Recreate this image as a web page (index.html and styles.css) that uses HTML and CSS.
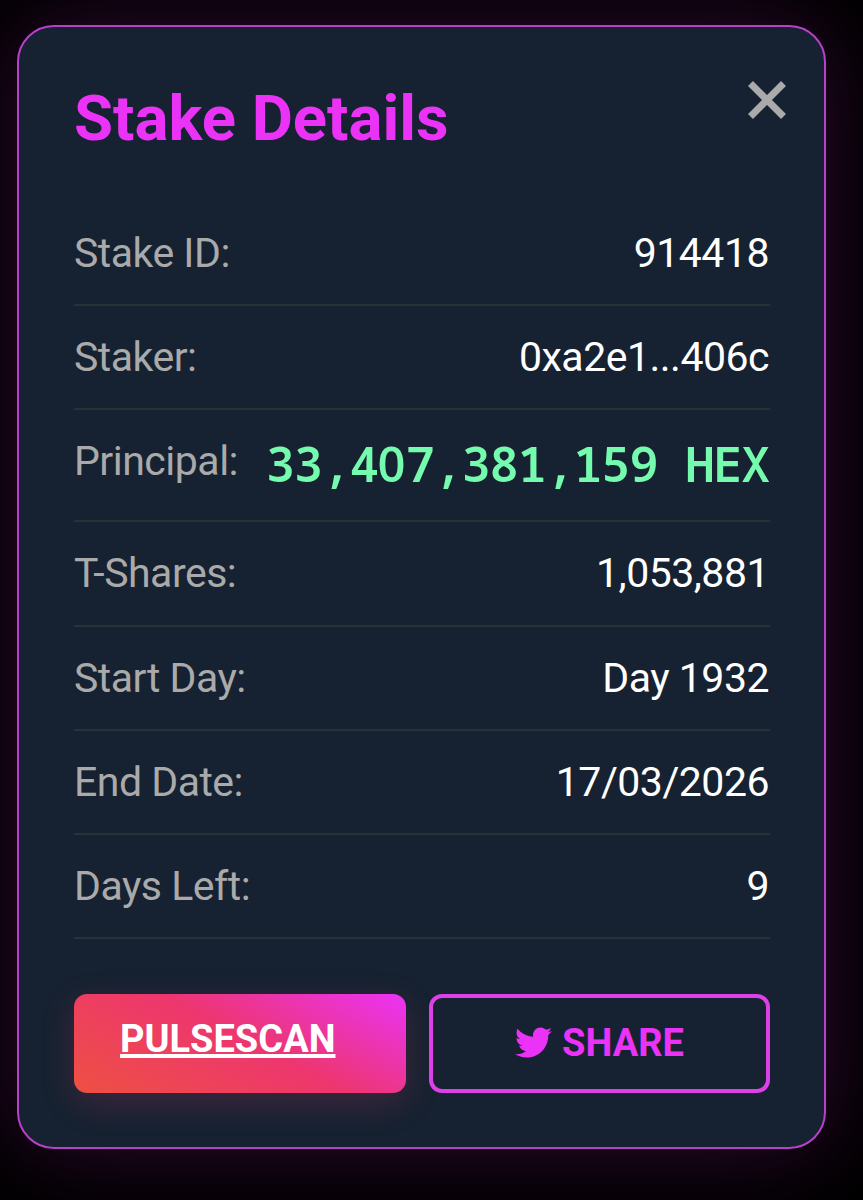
FILE: index.html
```html
<!DOCTYPE html>
<html lang="en">
<head>
    <meta charset="UTF-8">
    <meta name="viewport" content="width=device-width, initial-scale=1.0">
    <title>Stake Details</title>
    <link rel="stylesheet" href="styles.css">
</head>
<body>
    <div class="modal">
        <button class="close" aria-label="Close">
            <svg viewBox="0 0 38 38"><path d="M2.5 2.5 L35.5 35.5 M35.5 2.5 L2.5 35.5"/></svg>
        </button>
        <h2>Stake Details</h2>
        <div class="details">
            <div class="row"><span class="label">Stake ID:</span><span class="value">914418</span></div>
            <div class="row"><span class="label">Staker:</span><span class="value">0xa2e1...406c</span></div>
            <div class="row principal"><span class="label">Principal:</span><span class="amount">33,4<span class="zero">0</span>7,381,159 HEX</span></div>
            <div class="row"><span class="label">T-Shares:</span><span class="value">1,053,881</span></div>
            <div class="row"><span class="label">Start Day:</span><span class="value">Day 1932</span></div>
            <div class="row"><span class="label">End Date:</span><span class="value">17/03/2026</span></div>
            <div class="row"><span class="label">Days Left:</span><span class="value">9</span></div>
        </div>
        <div class="actions">
            <a class="btn scan" href="#">PULSESCAN</a>
            <button class="btn share">
                <svg viewBox="0 0 512 512"><path d="M459.37 151.716c.325 4.548.325 9.097.325 13.645 0 138.72-105.583 298.558-298.558 298.558-59.452 0-114.68-17.219-161.137-47.106 8.447.974 16.568 1.299 25.34 1.299 49.055 0 94.213-16.568 130.274-44.832-46.132-.975-84.792-31.188-98.112-72.772 6.498.974 12.995 1.624 19.818 1.624 9.421 0 18.843-1.3 27.614-3.573-48.081-9.747-84.143-51.98-84.143-102.985v-1.299c13.969 7.797 30.214 12.67 47.431 13.319-28.264-18.843-46.781-51.005-46.781-87.391 0-19.492 5.197-37.36 14.294-52.954 51.655 63.675 129.3 105.258 216.365 109.807-1.624-7.797-2.599-15.918-2.599-24.04 0-57.828 46.782-104.934 104.934-104.934 30.213 0 57.502 12.67 76.67 33.137 23.715-4.548 46.456-13.32 66.599-25.34-7.798 24.366-24.366 44.833-46.132 57.827 21.117-2.273 41.584-8.122 60.426-16.243-14.292 20.791-32.161 39.308-52.628 54.253z"/></svg>
                SHARE
            </button>
        </div>
    </div>
</body>
</html>
```
FILE: styles.css
```css
* {
    box-sizing: border-box;
}

body {
    margin: 0;
    padding: 25px 37px 0 17px;
    min-height: 1200px;
    background-color: #000;
    font-family: Roboto, sans-serif;
    overflow: hidden;
}

.modal {
    position: relative;
    height: 1124px;
    padding: 54px 54px 0 55px;
    background-color: #162231;
    border: 2px solid #b741cb;
    border-radius: 37px;
    box-shadow: 0 0 90px rgba(234, 51, 247, 0.2);
}

h2 {
    margin: 0;
    font-size: 63.4px;
    line-height: 75px;
    font-weight: 700;
    color: #ea33f7;
}

.close {
    position: absolute;
    top: 54px;
    right: 38px;
    width: 38px;
    height: 38px;
    padding: 0;
    border: none;
    background: none;
}

.close svg {
    display: block;
    stroke: #aaa;
    stroke-width: 7;
}

.details {
    margin-top: 46px;
}

.row {
    display: flex;
    justify-content: space-between;
    height: 104.2px;
    padding-top: 27px;
    border-bottom: 2px solid #2a3037;
    font-size: 41px;
    line-height: 49px;
    letter-spacing: -0.5px;
}

.principal {
    height: 112px;
}

.label {
    color: #aaa;
}

.value {
    margin-right: 1px;
    color: #fff;
}

.amount {
    margin-right: 1px;
    font-family: "Noto Sans Mono", "DejaVu Sans Mono", monospace;
    font-size: 49px;
    line-height: 52px;
    font-weight: 600;
    letter-spacing: -1.45px;
    color: #75fbae;
}

/* plain zero, the mono one is slashed */
.zero {
    font-family: "Open Sans", sans-serif;
    letter-spacing: 0;
}

.actions {
    display: flex;
    gap: 23px;
    margin-top: 55px;
}

.btn {
    height: 99px;
    border-radius: 13px;
    font-family: Roboto, sans-serif;
    font-size: 38px;
    line-height: 44px;
    font-weight: 700;
}

.scan {
    width: 332px;
    padding: 23px 46px;
    color: #fff;
    text-decoration-thickness: 4px;
    background: linear-gradient(28deg, #ee5042, #ed366f 53%, #ea33f7);
    box-shadow: 0 10px 34px rgba(237, 54, 111, 0.2);
}

.share {
    display: flex;
    flex: 1;
    justify-content: center;
    align-items: center;
    gap: 10px;
    padding: 0 0 2px;
    color: #ea33f7;
    background: none;
    border: 4px solid #dd40e8;
}

.share svg {
    width: 37px;
    height: 37px;
    fill: #ea33f7;
}
```
